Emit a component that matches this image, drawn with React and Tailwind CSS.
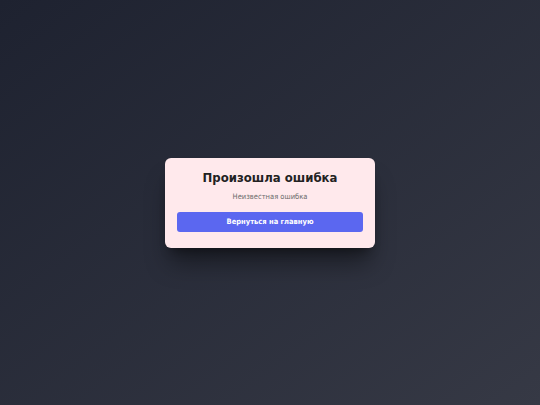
export default function App() {
  return (
    <div
      className="flex h-[405px] w-full items-center justify-center bg-gradient-to-br from-[#1e2230] to-[#363945]"
      style={{ fontFamily: '"DejaVu Sans Condensed", "DejaVu Sans", sans-serif' }}
    >
      <div className="w-[210px] rounded-md bg-[#ffe9ec] px-3 pt-[11px] pb-4 text-center shadow-xl shadow-black/40">
        <h1 className="text-[13px] font-bold leading-[18px] text-[#222222]">Произошла ошибка</h1>
        <p className="mt-[5px] text-[7.5px] leading-[10px] text-[#6b6b6b]">Неизвестная ошибка</p>
        <button className="mt-[10px] h-5 w-full rounded-[3px] bg-[#5b67f0] text-[7.5px] font-bold text-white">
          Вернуться на главную
        </button>
      </div>
    </div>
  );
}
